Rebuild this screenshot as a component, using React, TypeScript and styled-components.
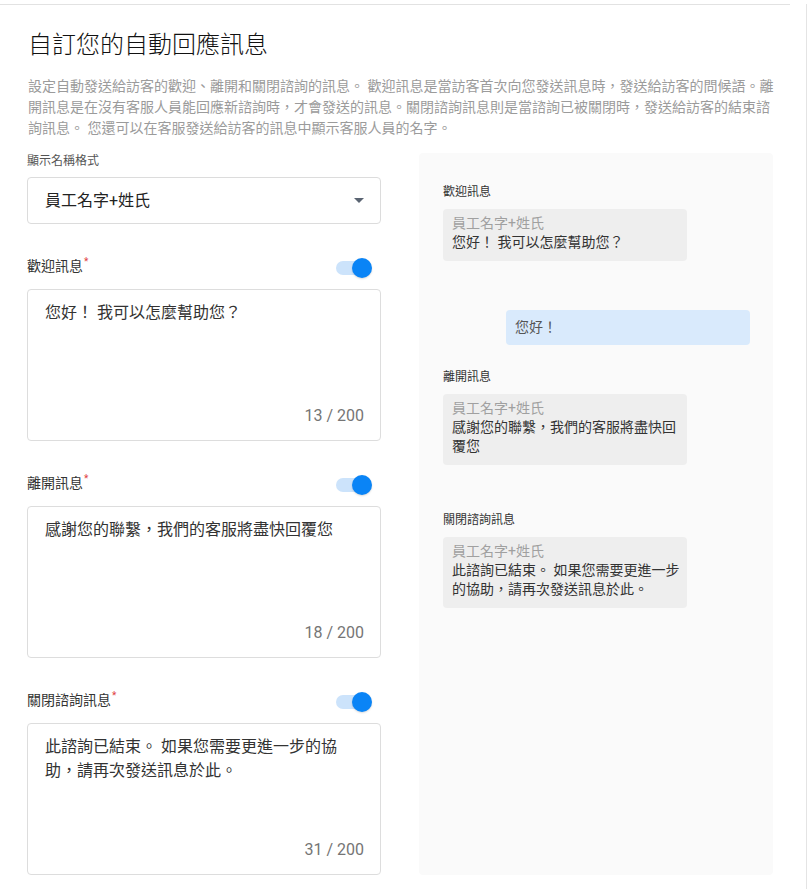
import { useState } from 'react';
import styled, { createGlobalStyle } from 'styled-components';

const GlobalStyle = createGlobalStyle`
  html, body {
    margin: 0;
    padding: 0;
    background: #ffffff;
  }
  body {
    font-family: Roboto, "Noto Sans CJK TC", "Noto Sans", sans-serif;
    color: #333;
  }
  * {
    box-sizing: border-box;
  }
`;

const Page = styled.div`
  width: 807px;
  min-height: 100vh;
  border-right: 1px solid #e4e4e4;
`;

const Divider = styled.div`
  width: 790px;
  margin-top: 4px;
  border-top: 1px solid #e2e2e2;
`;

const Content = styled.div`
  padding: 0 27px 24px;
`;

const Title = styled.h1`
  margin: 24px 0 0 1px;
  font-size: 24px;
  line-height: 32px;
  font-weight: 300;
  color: #111;
`;

const Description = styled.p`
  margin: 15px 0 0 1px;
  width: 752px;
  font-size: 14px;
  line-height: 21px;
  color: #9b9b9b;
`;

const Columns = styled.div`
  display: grid;
  grid-template-columns: 354px 354px;
  column-gap: 38px;
  margin-top: 14px;
`;

const FormColumn = styled.div`
  display: flex;
  flex-direction: column;
`;

const SmallLabel = styled.div`
  font-size: 12px;
  line-height: 16px;
  color: #555;
  margin-bottom: 8px;
`;

const Select = styled.div`
  height: 47px;
  display: flex;
  align-items: center;
  justify-content: space-between;
  padding: 0 16px 0 17px;
  border: 1px solid #dcdcdc;
  border-radius: 4px;
  font-size: 16px;
  line-height: 24px;
  color: #222;
  cursor: pointer;
`;

const Section = styled.div`
  margin-top: 32px;
`;

const LabelRow = styled.div`
  display: flex;
  justify-content: space-between;
  align-items: flex-start;
  height: 24px;
  padding-right: 9px;
`;

const FieldLabel = styled.label`
  font-size: 14px;
  line-height: 20px;
  color: #333;
`;

const Required = styled.span`
  color: #e04040;
  font-size: 10px;
  vertical-align: top;
  line-height: 12px;
  margin-left: 1px;
`;

const Switch = styled.button<{ $on: boolean }>`
  position: relative;
  width: 36px;
  height: 20px;
  margin-top: 2px;
  padding: 0;
  border: none;
  background: transparent;
  cursor: pointer;

  &::before {
    content: '';
    position: absolute;
    left: 0;
    top: 3px;
    width: 34px;
    height: 14px;
    border-radius: 7px;
    background: ${(p) => (p.$on ? '#cce3fb' : '#d6d6d6')};
  }

  &::after {
    content: '';
    position: absolute;
    top: 0;
    left: ${(p) => (p.$on ? '16px' : '0')};
    width: 20px;
    height: 20px;
    border-radius: 50%;
    background: ${(p) => (p.$on ? '#0a84f6' : '#f2f2f2')};
    box-shadow: 0 1px 2px rgba(0, 0, 0, 0.15);
  }
`;

const TextBox = styled.div`
  margin-top: 9px;
  height: 152px;
  display: flex;
  flex-direction: column;
  padding: 11px 16px 14px 17px;
  border: 1px solid #dddddd;
  border-radius: 4px;
`;

const TextInput = styled.textarea`
  flex: 1;
  margin: 0;
  padding: 0 18px 0 0;
  border: none;
  outline: none;
  resize: none;
  overflow: hidden;
  background: transparent;
  font-family: inherit;
  font-size: 16px;
  line-height: 24px;
  color: #333;
`;

const Counter = styled.div`
  align-self: flex-end;
  font-size: 16px;
  line-height: 20px;
  color: #757575;
`;

const Preview = styled.div`
  display: flex;
  flex-direction: column;
  align-items: flex-start;
  padding: 31px 23px 0 24px;
  background: #fafafa;
  border-radius: 4px;
`;

const PreviewLabel = styled.div<{ $gap: number }>`
  margin-top: ${(p) => p.$gap}px;
  margin-bottom: 8px;
  font-size: 12px;
  line-height: 17px;
  color: #333;
`;

const Bubble = styled.div`
  width: 244px;
  padding: 5px 5px 9px 9px;
  background: #eeeeee;
  border-radius: 4px;
  font-size: 14px;
  line-height: 19px;
`;

const AgentName = styled.div`
  color: #a0a0a0;
`;

const BubbleText = styled.div`
  color: #333;
`;

const VisitorBubble = styled.div`
  align-self: flex-end;
  width: 244px;
  margin-top: 49px;
  padding: 8px 9px;
  background: #d9eafc;
  border-radius: 4px;
  font-size: 14px;
  line-height: 19px;
  color: #555;
`;

const Caret = () => (
  <svg width="10" height="5" viewBox="0 0 10 5">
    <path d="M0 0 L10 0 L5 5 Z" fill="#5a6472" />
  </svg>
);

type MessageKey = 'welcome' | 'leave' | 'close';

const fields: { key: MessageKey; label: string }[] = [
  { key: 'welcome', label: '歡迎訊息' },
  { key: 'leave', label: '離開訊息' },
  { key: 'close', label: '關閉諮詢訊息' },
];

const displayName = '員工名字+姓氏';

export default function App() {
  const [messages, setMessages] = useState<Record<MessageKey, string>>({
    welcome: '您好！ 我可以怎麼幫助您？',
    leave: '感謝您的聯繫，我們的客服將盡快回覆您',
    close: '此諮詢已結束。 如果您需要更進一步的協助，請再次發送訊息於此。',
  });
  const [enabled, setEnabled] = useState<Record<MessageKey, boolean>>({
    welcome: true,
    leave: true,
    close: true,
  });

  return (
    <Page>
      <GlobalStyle />
      <Divider />
      <Content>
        <Title>自訂您的自動回應訊息</Title>
        <Description>
          設定自動發送給訪客的歡迎、離開和關閉諮詢的訊息。 歡迎訊息是當訪客首次向您發送訊息時，發送給訪客的問候語。離開訊息是在沒有客服人員能回應新諮詢時，才會發送的訊息。關閉諮詢訊息則是當諮詢已被關閉時，發送給訪客的結束諮詢訊息。 您還可以在客服發送給訪客的訊息中顯示客服人員的名字。
        </Description>

        <Columns>
          <FormColumn>
            <SmallLabel>顯示名稱格式</SmallLabel>
            <Select>
              <span>{displayName}</span>
              <Caret />
            </Select>

            {fields.map((f) => (
              <Section key={f.key}>
                <LabelRow>
                  <FieldLabel htmlFor={f.key}>
                    {f.label}
                    <Required>*</Required>
                  </FieldLabel>
                  <Switch
                    role="switch"
                    aria-checked={enabled[f.key]}
                    $on={enabled[f.key]}
                    onClick={() => setEnabled({ ...enabled, [f.key]: !enabled[f.key] })}
                  />
                </LabelRow>
                <TextBox>
                  <TextInput
                    id={f.key}
                    maxLength={200}
                    value={messages[f.key]}
                    onChange={(e) => setMessages({ ...messages, [f.key]: e.target.value })}
                  />
                  <Counter>{messages[f.key].length} / 200</Counter>
                </TextBox>
              </Section>
            ))}
          </FormColumn>

          <Preview>
            <PreviewLabel $gap={0}>歡迎訊息</PreviewLabel>
            <Bubble>
              <AgentName>{displayName}</AgentName>
              <BubbleText>{messages.welcome}</BubbleText>
            </Bubble>
            <VisitorBubble>您好！</VisitorBubble>

            <PreviewLabel $gap={24}>離開訊息</PreviewLabel>
            <Bubble>
              <AgentName>{displayName}</AgentName>
              <BubbleText>{messages.leave}</BubbleText>
            </Bubble>

            <PreviewLabel $gap={47}>關閉諮詢訊息</PreviewLabel>
            <Bubble>
              <AgentName>{displayName}</AgentName>
              <BubbleText>{messages.close}</BubbleText>
            </Bubble>
          </Preview>
        </Columns>
      </Content>
    </Page>
  );
}
